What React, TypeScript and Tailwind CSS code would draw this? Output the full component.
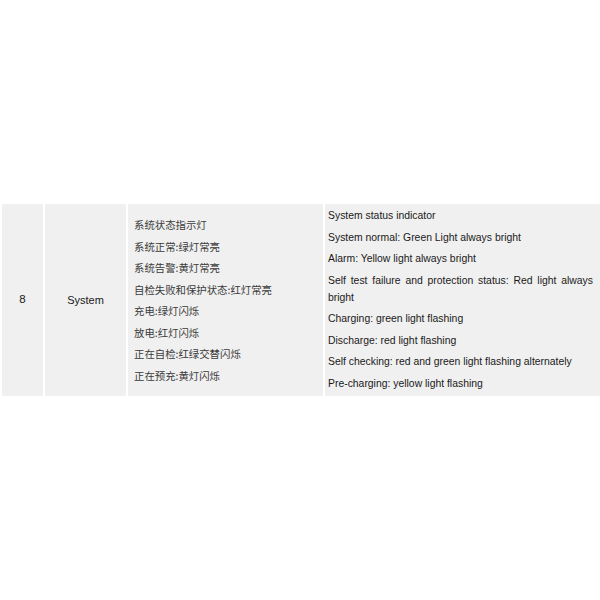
const zhLines = [
  "系统状态指示灯",
  "系统正常:绿灯常亮",
  "系统告警:黄灯常亮",
  "自检失败和保护状态:红灯常亮",
  "充电:绿灯闪烁",
  "放电:红灯闪烁",
  "正在自检:红绿交替闪烁",
  "正在预充:黄灯闪烁",
];

const enLines = [
  "System status indicator",
  "System normal: Green Light always bright",
  "Alarm: Yellow light always bright",
  "Self test failure and protection status: Red light always bright",
  "Charging: green light flashing",
  "Discharge: red light flashing",
  "Self checking: red and green light flashing alternately",
  "Pre-charging: yellow light flashing",
];

export default function App() {
  return (
    <div className="min-h-[600px] w-[600px] bg-white flex items-center pl-[2px] text-[#1a1a1a] font-['Liberation_Sans',Arial,sans-serif]">
      <div className="w-full grid grid-cols-[41px_81px_195px_1fr] gap-x-[2px] h-[192px]">
        <div className="bg-[#f0f0f0] flex items-center justify-center text-[11.5px]">8</div>
        <div className="bg-[#f0f0f0] flex items-center justify-center text-[11px]">System</div>
        <div className="bg-[#f0f0f0] flex flex-col justify-center pl-[6px] text-[10.4px] leading-[21.5px] text-[#3a3a3a] font-['Noto_Sans_CJK_SC',serif]">
          {zhLines.map((line) => (
            <div key={line}>{line}</div>
          ))}
        </div>
        <div className="bg-[#f0f0f0] pt-[3px] pl-[3px] pr-[7px] text-[10.4px] leading-[17px] flex flex-col gap-[4.5px]">
          {enLines.map((line) => (
            <p key={line} className="text-justify">
              {line}
            </p>
          ))}
        </div>
      </div>
    </div>
  );
}
